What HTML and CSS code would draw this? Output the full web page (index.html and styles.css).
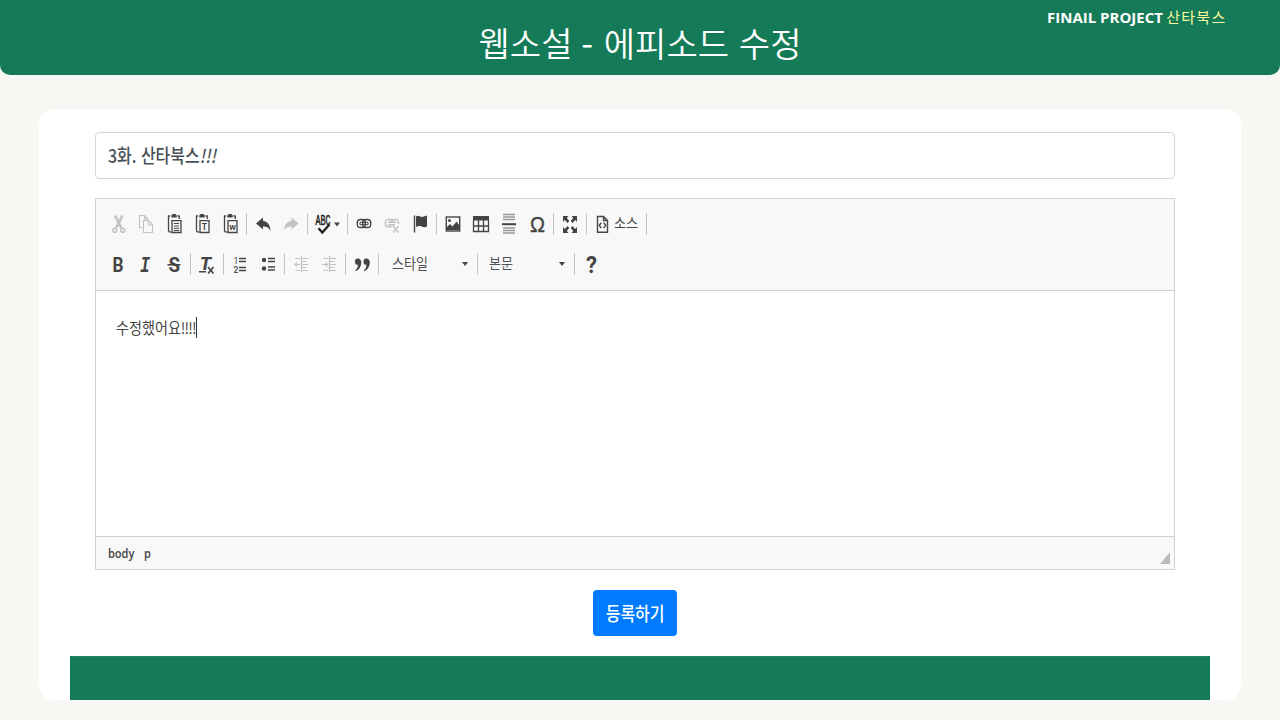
FILE: index.html
```html
<!DOCTYPE html>
<html lang="ko">
<head>
<meta charset="utf-8">
<title>웹소설 - 에피소드 수정</title>
<link rel="stylesheet" href="styles.css">
</head>
<body>
<header class="header">
  <h1 class="title">웹소설 <span class="dash">-</span> 에피소드 수정</h1>
  <div class="brand"><b>FINAIL PROJECT</b> <span>산타북스</span></div>
</header>
<main class="card">
  <div class="field"><span class="field-text">3화. 산타북스<i>!!!</i></span></div>
  <section class="editor">
    <div class="toolbar">
      <div class="row">
        <svg class="ic off" viewBox="0 0 28 24"><path d="M11 3.500L17.300 16M18.500 3.500L12 16" fill="none" stroke="currentColor" stroke-width="2.600"/><circle cx="10.800" cy="18.300" r="2" fill="none" stroke="currentColor" stroke-width="1.600"/><circle cx="18.700" cy="18.300" r="2" fill="none" stroke="currentColor" stroke-width="1.600"/></svg>
        <svg class="ic off" viewBox="0 0 28 24"><g fill="none" stroke="currentColor" stroke-width="1.100"><path d="M10.500 15.500H7.500V3.500H12.500L15.500 6.500V8.500M12.500 3.500V7H15.500"/><path d="M11.500 8.500H16.500L20.500 12.500V20.500H11.500ZM16.500 8.500V13H20.500"/></g></svg>
        <svg class="ic" viewBox="0 0 28 24"><g fill="none" stroke="currentColor" stroke-width="1.300"><path d="M10 4H8.500V18.500Q8.500 20 10 20H11M17.500 4H19.300V7"/><path d="M12 8.700H21V20.500H12Z"/><path d="M13.800 11.500H19.200M13.800 14H19.200M13.800 16.300H19.200M13.800 18.500H19.200" stroke-width="1"/></g><path d="M11.300 5.500V3.500L12.500 2H15.500L16.700 3.500V5.500Z"/></svg>
        <svg class="ic" viewBox="0 0 28 24"><g fill="none" stroke="currentColor" stroke-width="1.300"><path d="M10 4H8.500V18.500Q8.500 20 10 20H11M17.500 4H19.300V7"/><path d="M12 8.700H21V20.500H12Z"/></g><path d="M11.300 5.500V3.500L12.500 2H15.500L16.700 3.500V5.500Z"/><text x="13.800" y="17.800" font-size="8.500" font-weight="bold">T</text></svg>
        <svg class="ic" viewBox="0 0 28 24"><g fill="none" stroke="currentColor" stroke-width="1.300"><path d="M10 4H8.500V18.500Q8.500 20 10 20H11M17.500 4H19.300V7"/><path d="M12 8.700H21V20.500H12Z"/></g><path d="M11.300 5.500V3.500L12.500 2H15.500L16.700 3.500V5.500Z"/><text x="13.200" y="17.500" font-size="8" font-weight="bold" textLength="6.600" lengthAdjust="spacingAndGlyphs">W</text></svg>
        <i class="sep"></i>
        <svg class="ic" viewBox="0 0 28 24"><path d="M7 11.500L14 5.500V9C18.500 9.500 21 12.500 21.500 19C19.500 15.500 18 14.500 14 14.500V17.500Z"/></svg>
        <svg class="ic off" viewBox="0 0 28 24"><path d="M21.500 11.500L14.500 5.500V9C10 9.500 7.500 12.500 7 19C9 15.500 10.500 14.500 14.500 14.500V17.500Z"/></svg>
        <i class="sep"></i>
        <svg class="ic spell" viewBox="0 0 35 24"><text transform="translate(5.600 13) scale(1 1.450)" font-size="9.500" font-family="Liberation Mono" stroke="currentColor" stroke-width=".35" textLength="15" lengthAdjust="spacingAndGlyphs">ABC</text><path d="M8.500 16.200L12.300 20.500L19.500 12.500" fill="none" stroke="currentColor" stroke-width="2.400"/><path d="M24 10.500H30L27 14.500Z" fill="#444"/></svg>
        <i class="sep"></i>
        <svg class="ic" viewBox="0 0 28 24"><g fill="none" stroke="currentColor"><rect x="7.300" y="7.500" width="8" height="8" rx="3.300" stroke-width="1.400"/><rect x="12.700" y="7.500" width="8" height="8" rx="3.300" stroke-width="1.400"/><path d="M10 10.300H18V12.700H10Z" stroke-width="1"/></g></svg>
        <svg class="ic off" viewBox="0 0 28 24"><g fill="none" stroke="currentColor" stroke-width="1.400"><path d="M13.500 14.800H10.500Q7.300 14.800 7.300 11.300Q7.300 7.500 10.500 7.500H12.500Q15 7.500 15.500 9.500M12.500 9.500Q13 7.500 15.500 7.500H17.500Q20.700 7.500 20.700 12M10 10.300H18M10 12.700H17M15 14L20.500 20.500M20.500 14L15 20.500"/></g></svg>
        <svg class="ic" viewBox="0 0 28 24"><path d="M8.500 3.500V20.500" stroke="currentColor" stroke-width="1.400"/><path d="M10 4.500C13 2.500 14 5.500 17 4.800Q19.500 4 21 3.500V14.500C18 16.500 16 14 14 14Q12 13.500 10 15Z"/></svg>
        <i class="sep"></i>
        <svg class="ic" viewBox="0 0 28 24"><rect x="7.300" y="5" width="13.400" height="14" fill="none" stroke="currentColor" stroke-width="1.400"/><path d="M8 18V15L11 12L13.500 14.500L17.500 9.500L20 13V18Z"/><circle cx="10.500" cy="8.500" r="1.500"/></svg>
        <svg class="ic" viewBox="0 0 28 24"><path d="M6 4H22V8.500H6Z"/><path d="M6.500 8V19.500H21.500V8M6 14H22M11.500 8V19.500M16.500 8V19.500" fill="none" stroke="currentColor" stroke-width="1.300"/></svg>
        <svg class="ic" viewBox="0 0 28 24"><path d="M8 2.500H20M8 5H20M8 7.500H20M8 16H20M8 18.500H20M8 21H20" stroke="#999" stroke-width="1.300"/><path d="M7 11.200H21V13.200H7Z"/></svg>
        <svg class="ic wide" viewBox="0 0 28 24"><text class="omega" transform="translate(7 20.300) scale(1 1.180)" font-size="19" textLength="15" lengthAdjust="spacingAndGlyphs">Ω</text></svg>
        <i class="sep"></i>
        <svg class="ic" viewBox="0 0 28 24"><path d="M7 4H12.500L10.800 6L13.300 9L11.500 11L8.800 8L7 10ZM21 4H15.500L17.200 6L14.700 9L16.500 11L19.200 8L21 10ZM7 21H12.500L10.800 19L13.300 16L11.500 14L8.800 17L7 15ZM21 21H15.500L17.200 19L14.700 16L16.500 14L19.200 17L21 15Z"/></svg>
        <i class="sep"></i>
        <div class="source"><svg viewBox="0 0 14 24"><path d="M2.500 4.500H8.500L12.500 8.500V20.300H2.500ZM8.500 4.500V8.500H12.500M6.300 10.700L4.300 13.300L6.300 16M8.700 10.700L10.700 13.300L8.700 16" fill="none" stroke="currentColor" stroke-width="1.400"/></svg><span>소스</span></div>
        <i class="sep"></i>
      </div>
      <div class="row">
        <svg class="ic wide" viewBox="0 0 28 24"><text transform="translate(8.600 19.500) scale(1 1.120)" font-size="18" font-weight="bold" textLength="11" lengthAdjust="spacingAndGlyphs">B</text></svg>
        <svg class="ic wide" viewBox="0 0 28 24"><text transform="translate(8 19.500) scale(1 1.250)" font-size="18" font-weight="bold" font-style="italic" font-family="Liberation Mono" textLength="10" lengthAdjust="spacingAndGlyphs">I</text></svg>
        <svg class="ic wide" viewBox="0 0 28 24"><text transform="translate(8.400 19.500) scale(1 1.120)" font-size="18" font-weight="bold" textLength="11.500" lengthAdjust="spacingAndGlyphs">S</text><path d="M7.500 12H20.500V13.500H7.500Z"/></svg>
        <i class="sep"></i>
        <svg class="ic" viewBox="0 0 28 24"><text x="6.800" y="18.300" font-size="19" font-weight="bold" font-style="italic">T</text><path d="M6 19H13V20.500H6Z"/><path d="M15 15L20.500 21.500M20.500 15L15 21.500" stroke="currentColor" stroke-width="1.700"/></svg>
        <i class="sep"></i>
        <svg class="ic" viewBox="0 0 28 24"><text x="7.500" y="11.500" font-size="8.500">1</text><text x="7.500" y="20.500" font-size="8.500" font-weight="500">2</text><path d="M13 6.500H20M13 9.500H20M13 15.500H20M13 18.500H20" stroke="currentColor" stroke-width="1.300"/></svg>
        <svg class="ic" viewBox="0 0 28 24"><circle cx="10" cy="8" r="2.200"/><circle cx="10" cy="16.500" r="2.200"/><path d="M14 6.500H21M14 9.500H21M14 15H21M14 18H21" stroke="currentColor" stroke-width="1.300"/></svg>
        <i class="sep"></i>
        <svg class="ic off" viewBox="0 0 28 24"><path d="M14.500 4V20M8.500 6.500H13M15 6.500H21M15 9.500H19.500M15 12.500H21M15 15.500H19.500M8.500 18.500H13M15 18.500H21M8 12.500H13M10 10.500L8 12.500L10 14.500" fill="none" stroke="currentColor" stroke-width="1.200"/></svg>
        <svg class="ic off" viewBox="0 0 28 24"><path d="M14.500 4V20M8.500 6.500H13M15 6.500H21M15 9.500H19.500M15 12.500H21M15 15.500H19.500M8.500 18.500H13M15 18.500H21M7 12.500H12M10.500 10.500L12.500 12.500L10.500 14.500" fill="none" stroke="currentColor" stroke-width="1.200"/></svg>
        <i class="sep"></i>
        <svg class="ic" viewBox="0 0 28 24"><path d="M9.700 6.500C12 6.500 13.500 8.200 13.300 11C13 15 11 18 7.500 19.300L7.300 18.500Q10 16.500 10 12.800Q7 13 7 9.700Q7 6.500 9.700 6.500ZM18.200 6.500C20.500 6.500 22 8.200 21.800 11C21.500 15 19.500 18 16 19.300L15.800 18.500Q18.500 16.500 18.500 12.800Q15.500 13 15.500 9.700Q15.500 6.500 18.200 6.500Z"/></svg>
        <i class="sep"></i>
        <div class="combo styles"><span>스타일</span><i class="caret"></i></div>
        <i class="sep"></i>
        <div class="combo format"><span>본문</span><i class="caret"></i></div>
        <i class="sep"></i>
        <svg class="ic wide" viewBox="0 0 28 24"><text x="9" y="20.500" font-size="23.500" font-weight="bold" textLength="11" lengthAdjust="spacingAndGlyphs">?</text></svg>
      </div>
    </div>
    <div class="content"><span class="content-text">수정했어요<span class="marks">!!!!</span></span><i class="cursor"></i></div>
    <div class="path"><span>body</span><span>p</span><svg class="grip" viewBox="0 0 10 12"><path d="M10 0V12H0Z"/></svg></div>
  </section>
  <button class="submit"><span>등록하기</span></button>
  <div class="bar"></div>
</main>
</body>
</html>
```
FILE: styles.css
```css
* { box-sizing: border-box; }
body {
  margin: 0;
  height: 720px;
  overflow: hidden;
  background: #f7f8f3;
  font-family: "Noto Sans CJK KR", sans-serif;
}
.header {
  position: relative;
  height: 75px;
  padding-top: 18px;
  background: #157a57;
  border-radius: 0 0 10px 10px;
  color: #fff;
}
.title {
  margin: 0;
  text-align: center;
  font-size: 34px;
  line-height: 50px;
  font-weight: 350;
  letter-spacing: 0.1px;
  white-space: nowrap;
}
.dash { position: relative; top: 2px; left: -1px; font-weight: 400; }
.brand {
  position: absolute;
  top: 7px;
  left: 1047px;
  font-size: 15px;
  line-height: 20px;
  white-space: nowrap;
}
.brand b { font-family: "Open Sans", sans-serif; font-weight: 700; letter-spacing: 0; }
.brand span { margin-left: -1px; color: #f8f89c; letter-spacing: 1.3px; }
.card {
  display: flex;
  flex-direction: column;
  width: 1202px;
  height: 591px;
  margin: 34px 39px 0;
  padding: 23px 31px 0;
  background: #fff;
  border-radius: 15px;
}
.field {
  height: 47px;
  margin: 0 35px 0 25px;
  padding-left: 12px;
  border: 1px solid #d3d7dc;
  border-radius: 4px;
  color: #495057;
  font-size: 18px;
  line-height: 45px;
  font-weight: 500;
}
.field-text, .source > span, .combo > span, .content-text, .path > span, .submit > span {
  display: inline-block;
  transform-origin: 0 50%;
  white-space: nowrap;
}
.field-text { transform: scale(0.885, 1.05); }
.editor {
  display: flex;
  flex-direction: column;
  height: 372px;
  margin: 19px 35px 0 25px;
  border: 1px solid #d1d1d1;
  color: #444;
}
.toolbar {
  display: flex;
  flex-direction: column;
  gap: 12px;
  height: 92px;
  padding: 11px 0 0 8px;
  background: #f8f8f8;
  border-bottom: 1px solid #d1d1d1;
}
.row { display: flex; align-items: center; height: 28px; }
.ic { width: 28px; height: 24px; flex: none; fill: currentColor; font-family: Roboto, sans-serif; }
.off { color: #c2c2c2; }
.spell { width: 35px; color: #222; }
.omega { font-family: "Liberation Sans", sans-serif; stroke: #444; stroke-width: 0.3px; }
.wide { overflow: visible; }
.sep { width: 1px; height: 22px; margin: 0 2px; background: #c3c3c3; flex: none; }
.source { display: flex; align-items: center; width: 55px; padding-left: 6px; font-size: 14px; line-height: 24px; color: #484848; }
.source svg { width: 14px; height: 24px; flex: none; }
.source > span { margin: -4px 0 0 5px; transform: scaleX(0.94); }
.combo { display: flex; align-items: center; justify-content: space-between; font-size: 14px; line-height: 24px; }
.combo > span { transform: scale(0.93, 1.04); margin-top: -3px; color: #505050; }
.styles { width: 94px; padding: 0 7px 0 11px; }
.format { width: 92px; padding: 0 7px 0 9px; }
.caret { border: 3px solid transparent; border-top: 4px solid #444; border-bottom: 0; }
.content { display: flex; align-items: center; height: 246px; padding: 0 0 172px 20px; border-bottom: 1px solid #d1d1d1; background: #fff; font-size: 15px; }
.content-text { width: 80px; transform: scale(0.94, 1.05); }
.marks { letter-spacing: -0.9px; }
.cursor { width: 1px; height: 21px; background: #333; }
.path { display: flex; align-items: center; flex: 1; padding: 0 4px 0 12px; background: #f8f8f8; font: 600 12px/20px "Open Sans", sans-serif; }
.path > span { width: 36px; margin-top: 1px; transform: scale(0.92, 1.05); }
.grip { width: 10px; height: 12px; margin: 9px 0 0 auto; fill: #bcbcbc; }
.submit {
  align-self: center;
  width: 84px;
  height: 46px;
  margin: 20px 10px 0 0;
  padding: 0;
  border: 0;
  border-radius: 4px;
  background: #007bff;
  color: #fff;
  font: 500 18px/45px "Noto Sans CJK KR", sans-serif;
}
.submit > span { transform: scale(0.89, 1.05); transform-origin: 50% 50%; }
.bar { height: 44px; margin-top: auto; background: #157a57; border-top: 1px solid #218360; }
```
